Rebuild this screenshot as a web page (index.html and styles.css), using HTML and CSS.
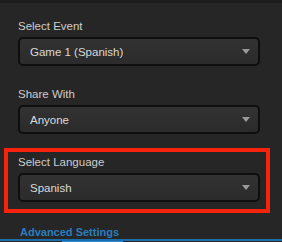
FILE: index.html
```html
<!DOCTYPE html>
<html lang="en">
<head>
  <meta charset="UTF-8" />
  <meta name="viewport" content="width=device-width, initial-scale=1.0" />
  <title>Stream Settings</title>
  <link rel="stylesheet" href="styles.css">
</head>
<body>
  <div class="topbar"></div>

  <div class="panel">
    <div class="field">
      <div class="label">Select Event</div>
      <div class="select">
        <span>Game 1 (Spanish)</span>
        <svg class="arrow" width="8" height="5" viewBox="0 0 8 5"><polygon points="0,0 8,0 4,5" /></svg>
      </div>
    </div>

    <div class="field">
      <div class="label">Share With</div>
      <div class="select">
        <span>Anyone</span>
        <svg class="arrow" width="8" height="5" viewBox="0 0 8 5"><polygon points="0,0 8,0 4,5" /></svg>
      </div>
    </div>

    <div class="field highlight">
      <div class="label">Select Language</div>
      <div class="select">
        <span>Spanish</span>
        <svg class="arrow" width="8" height="5" viewBox="0 0 8 5"><polygon points="0,0 8,0 4,5" /></svg>
      </div>
    </div>

    <a class="advanced" href="#">Advanced Settings</a>
  </div>

  <div class="tabline"><div class="tab-active"></div></div>
</body>
</html>
```

FILE: styles.css
```css
body {
  margin: 0;
  height: 242px;
  overflow: hidden;
  background: #262626;
  font-family: 'Liberation Sans', Arial, sans-serif;
  color: #d4d4d4;
}
.topbar {
  height: 3px;
  background: #1d1d1d;
}
.panel {
  padding: 9px 0 0 4px;
}
.field {
  width: 242px;
  padding: 3px 6px 7px 10px;
  border: 4px solid transparent;
  margin-bottom: 3px;
}
.field.highlight {
  border-color: #f8230c;
}
.label {
  font-size: 11.5px;
  line-height: 14px;
  color: #cdcdcd;
  margin-bottom: 4px;
}
.select {
  box-sizing: border-box;
  width: 242px;
  height: 29px;
  display: flex;
  align-items: center;
  justify-content: space-between;
  padding: 0 8px 0 10px;
  border: 2px solid #0e0e0e;
  border-radius: 5px;
  background: linear-gradient(#323232, #2b2b2b);
  font-size: 11.5px;
  color: #dadada;
}
.arrow polygon {
  fill: #9a9a9a;
}
.advanced {
  display: block;
  margin: 12px 0 0 16px;
  font-size: 11px;
  line-height: 14px;
  font-weight: bold;
  color: #2a7dbf;
  text-decoration: none;
}
.tabline {
  height: 3px;
  border-top: 2px solid #1b6eab;
  box-sizing: border-box;
}
.tab-active {
  margin-left: 62px;
  width: 61px;
  height: 1px;
  background: #2a8ad0;
}
```
